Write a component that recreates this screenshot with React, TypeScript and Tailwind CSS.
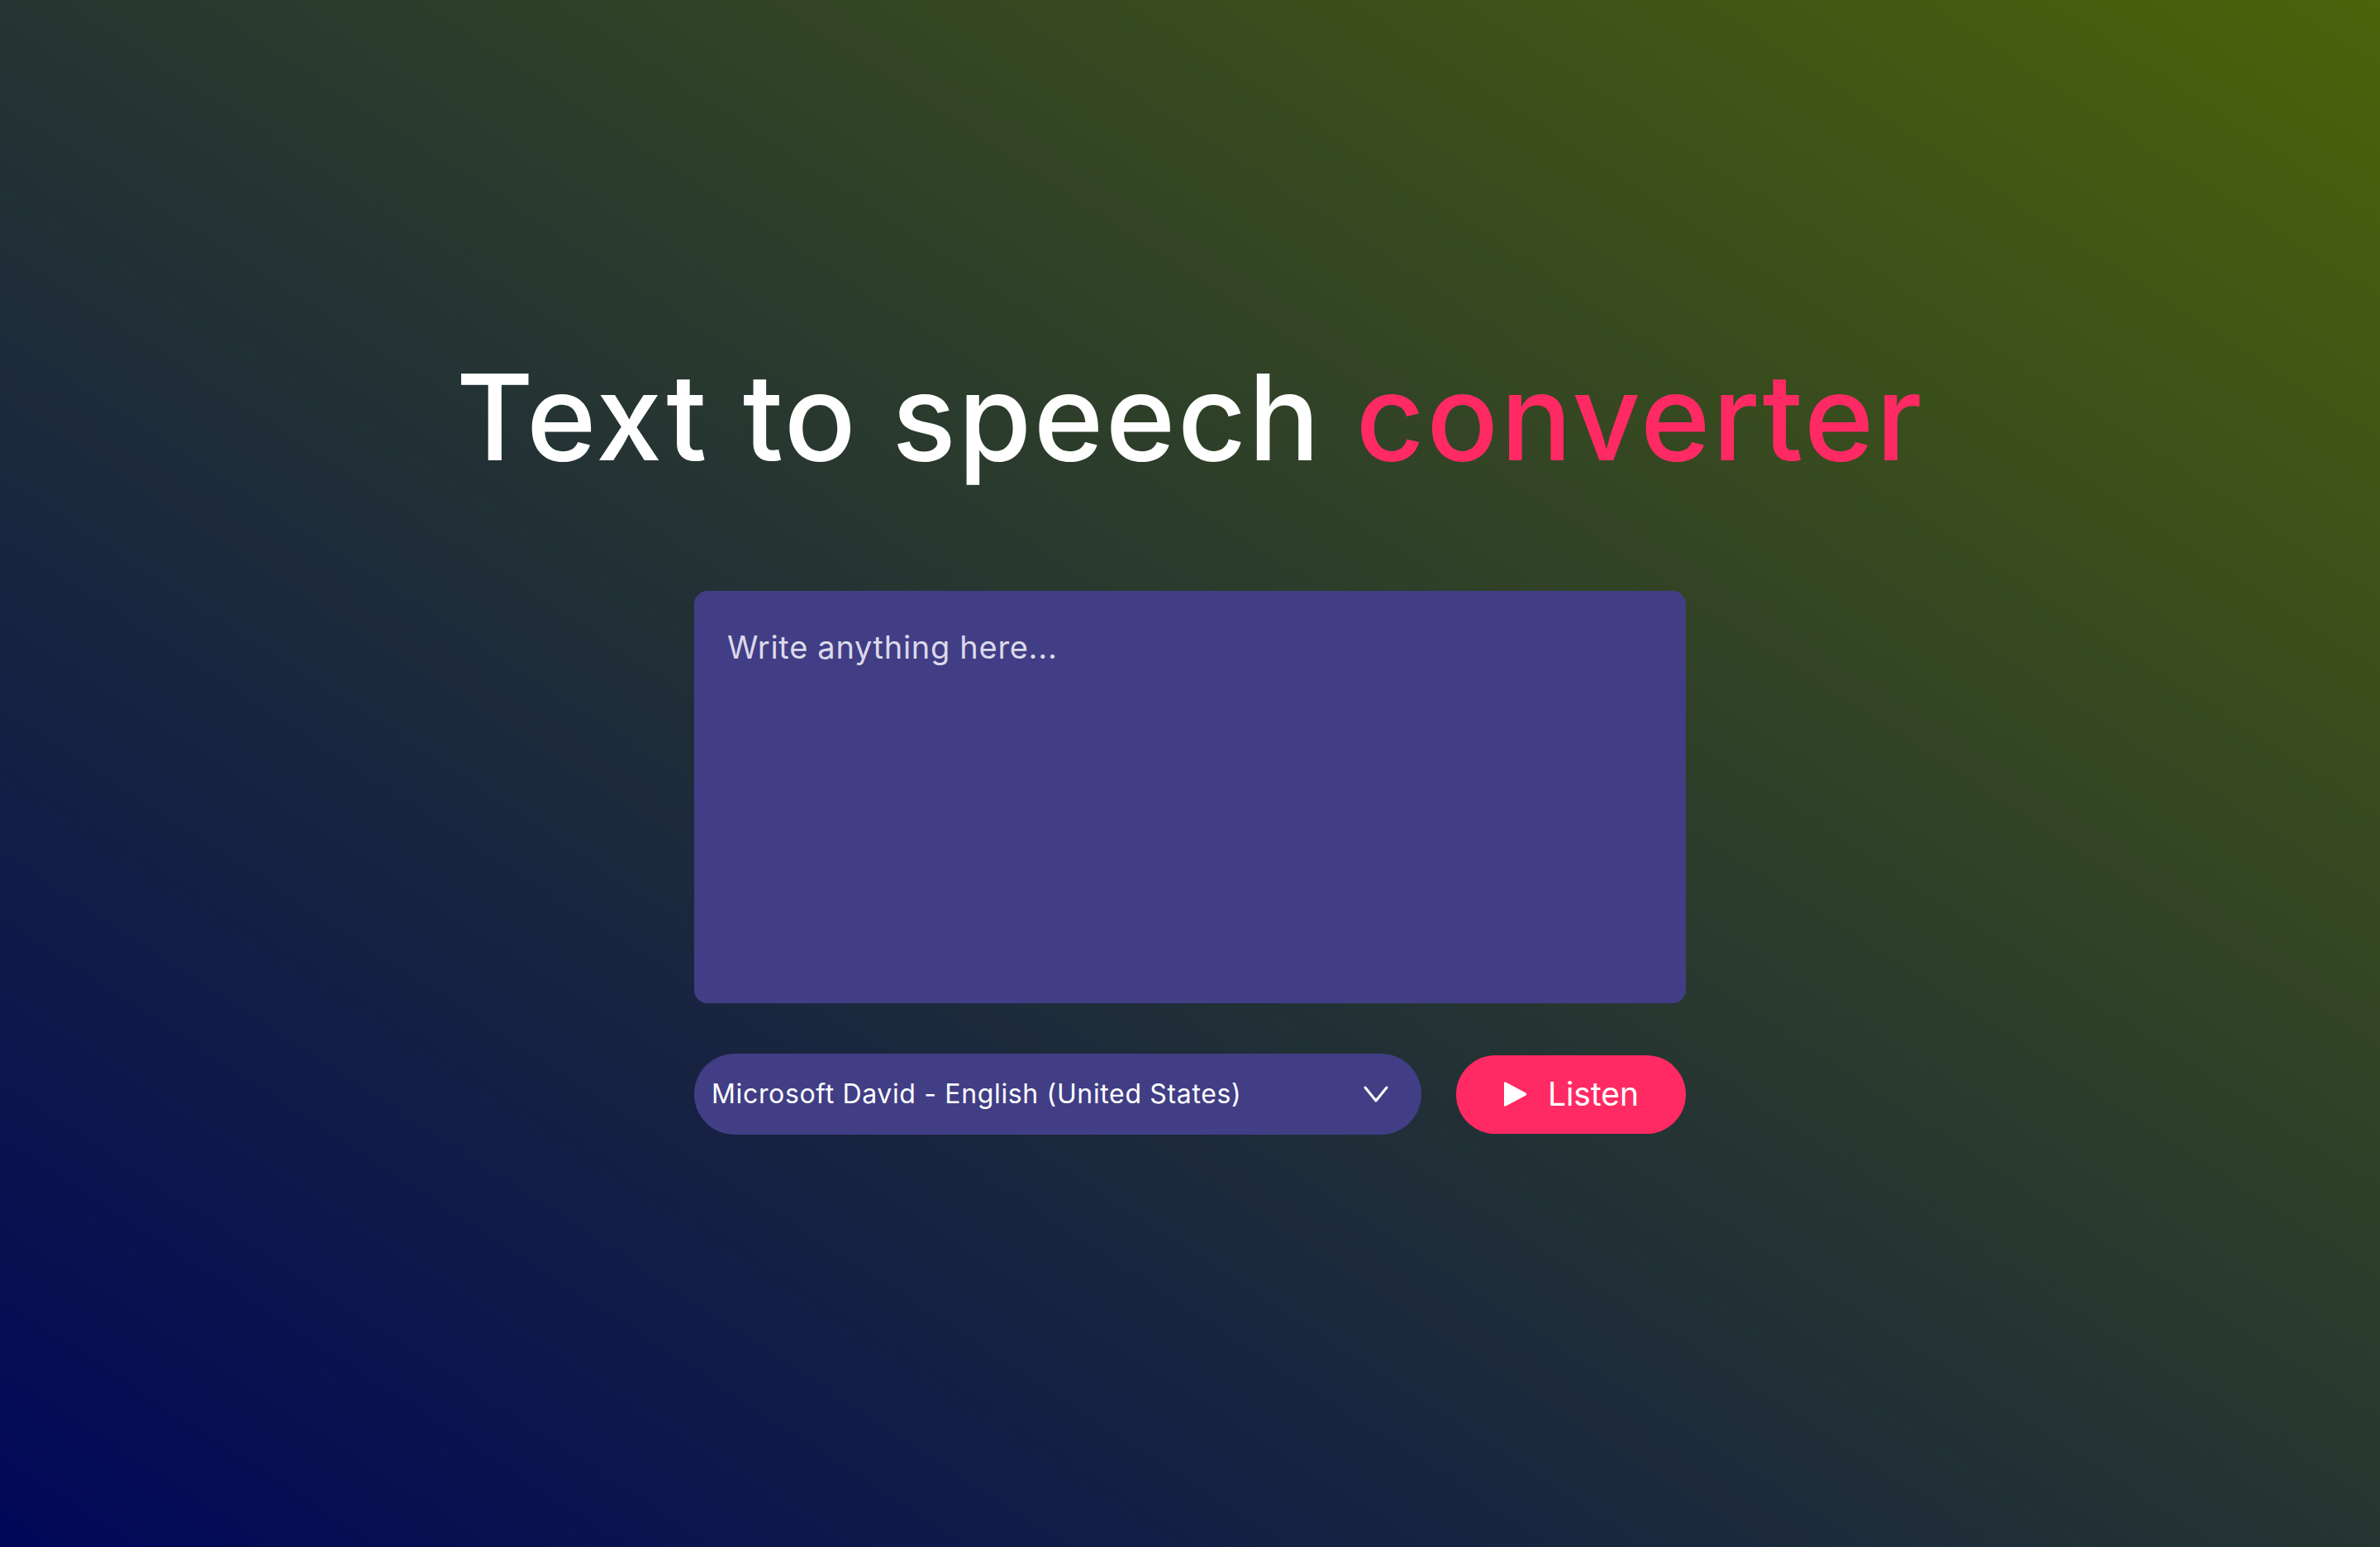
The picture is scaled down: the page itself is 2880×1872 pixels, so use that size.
import { useState } from 'react';

const voices = ['Microsoft David - English (United States)'];

function PlayIcon() {
  return (
    <svg width="30" height="36" viewBox="0 0 30 36" fill="none">
      <path d="M3 3.5 L27 16.3 Q29.5 18 27 19.7 L3 32.5 Q1 33.5 1 31.2 V4.8 Q1 2.5 3 3.5 Z" fill="#ffffff" />
    </svg>
  );
}

function ChevronIcon() {
  return (
    <svg width="30" height="22" viewBox="0 0 30 22" fill="none">
      <path d="M2 3 L15 19 L28 3" stroke="#ffffff" strokeWidth="3" strokeLinecap="round" strokeLinejoin="round" />
    </svg>
  );
}

export default function App() {
  const [text, setText] = useState('');
  const [voice] = useState(voices[0]);

  return (
    <div
      className="min-h-screen h-[1872px] w-full bg-[linear-gradient(to_top_right,#010759,#4b630a)] flex flex-col items-center pt-[433px]"
      style={{ fontFamily: 'Inter, "Noto Sans", sans-serif' }}
    >
      {/* Heading */}
      <h1 className="text-[144px] leading-none font-medium text-white tracking-[2.5px]">
        Text to speech <span className="text-[#ff2a64]">converter</span>
      </h1>

      {/* Text input */}
      <textarea
        value={text}
        onChange={(e) => setText(e.target.value)}
        placeholder="Write anything here..."
        className="mt-[138px] w-[1200px] h-[499px] rounded-[16px] bg-[#413e85] px-[40px] pt-[40px] text-[38px] leading-[1.5] tracking-[0.7px] text-white placeholder:text-[#dcd9ea] outline-none resize-none"
      />

      {/* Controls */}
      <div className="mt-[61px] w-[1200px] flex items-center gap-[42px]">
        <div className="w-[880px] h-[98px] rounded-full bg-[#413e85] flex items-center justify-between pl-[21px] pr-[40px] text-white text-[32px] tracking-[0.65px]">
          <span>{voice}</span>
          <ChevronIcon />
        </div>
        <button className="w-[278px] h-[95px] rounded-full bg-[#ff2a64] flex items-center justify-center gap-[24px] text-white text-[39px]">
          <PlayIcon />
          <span>Listen</span>
        </button>
      </div>
    </div>
  );
}
